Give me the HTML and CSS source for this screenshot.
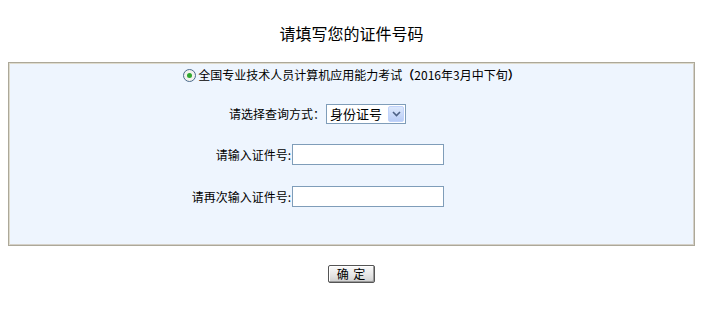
FILE: index.html
```html
<!DOCTYPE html>
<html lang="zh-CN">
<head>
<meta charset="utf-8">
<title>请填写您的证件号码</title>
<link rel="stylesheet" href="styles.css">
</head>
<body>
<h1 class="title">请填写您的证件号码</h1>
<div class="panel">
  <div class="row-radio">
    <span class="radio"><span class="radio-dot"></span></span>
    <span class="radio-text">全国专业技术人员计算机应用能力考试<b class="paren">（</b>2016年3月中下旬<b class="paren">）</b></span>
  </div>
  <div class="row-select">
    <span class="label">请选择查询方式：</span>
    <span class="select">
      <span class="select-value">身份证号</span>
      <span class="select-btn">
        <svg width="9" height="6" viewBox="0 0 9 6"><path d="M1 1 L4.5 4.5 L8 1" fill="none" stroke="#4d6185" stroke-width="1.6"/></svg>
      </span>
    </span>
  </div>
  <div class="row-input">
    <span class="label label-input">请输入证件号:</span>
    <span class="field"></span>
  </div>
  <div class="row-input row-input-2">
    <span class="label label-input">请再次输入证件号:</span>
    <span class="field"></span>
  </div>
</div>
<div class="actions">
  <span class="button">确 定</span>
</div>
</body>
</html>
```

FILE: styles.css
```css
html, body {
  margin: 0;
  padding: 0;
  background: #ffffff;
}
body {
  margin: 8px;
  font-family: "Noto Sans CJK SC", "DejaVu Sans", sans-serif;
  font-size: 12px;
  color: #000;
}
.title {
  margin: 0;
  height: 54px;
  line-height: 50px;
  font-size: 16px;
  font-weight: normal;
  text-align: center;
}
.panel {
  background: #eef5fe;
  border: 1px solid #aca899;
  box-shadow: inset 1px 1px 0 #dedbcd, inset -1px -1px 0 #d4d0c8;
  padding: 1px 1px 38px 1px;
}
.row-radio {
  height: 22px;
  display: flex;
  align-items: center;
  justify-content: center;
  gap: 2px;
}
.radio {
  width: 11px;
  height: 11px;
  border: 1px solid #4a6a8c;
  border-radius: 50%;
  background: #f2f2ee;
  display: flex;
  align-items: center;
  justify-content: center;
}
.radio-dot {
  width: 5px;
  height: 5px;
  border-radius: 50%;
  background: #2fa82f;
}
.radio-text {
  line-height: 22px;
  white-space: nowrap;
}
.paren {
  font-weight: bold;
}
.row-select {
  margin-top: 18px;
  height: 20px;
  display: flex;
  align-items: center;
  padding-left: 219px;
}
.label {
  white-space: nowrap;
  line-height: 20px;
}
.select {
  margin-left: 1px;
  width: 78px;
  height: 18px;
  border: 1px solid #7f9db9;
  background: #fff;
  display: flex;
  align-items: center;
  justify-content: space-between;
}
.select-value {
  font-size: 13px;
  padding-left: 3px;
  line-height: 18px;
}
.select-btn {
  width: 16px;
  height: 16px;
  margin-right: 1px;
  border-radius: 2px;
  background: linear-gradient(#dce8fc, #b9cdf6);
  border: 1px solid #c1d3fb;
  box-sizing: border-box;
  display: flex;
  align-items: center;
  justify-content: center;
}
.row-input {
  margin-top: 20px;
  height: 21px;
  display: flex;
  align-items: center;
}
.row-input-2 {
  margin-top: 21px;
}
.label-input {
  width: 281px;
  text-align: right;
  padding-right: 1px;
}
.field {
  width: 150px;
  height: 19px;
  border: 1px solid #7f9db9;
  background: #fff;
}
.actions {
  margin-top: 19px;
  display: flex;
  justify-content: center;
}
.button {
  width: 45px;
  height: 16px;
  border: 1px solid #555;
  border-radius: 2px;
  background: linear-gradient(#fafafa, #e4e4e4 60%, #cfcfcf);
  box-shadow: inset -1px -1px 0 #9a9a9a, inset 1px 1px 0 #fff;
  display: flex;
  align-items: center;
  justify-content: center;
  font-size: 12px;
  line-height: 16px;
  letter-spacing: 1px;
}
```
